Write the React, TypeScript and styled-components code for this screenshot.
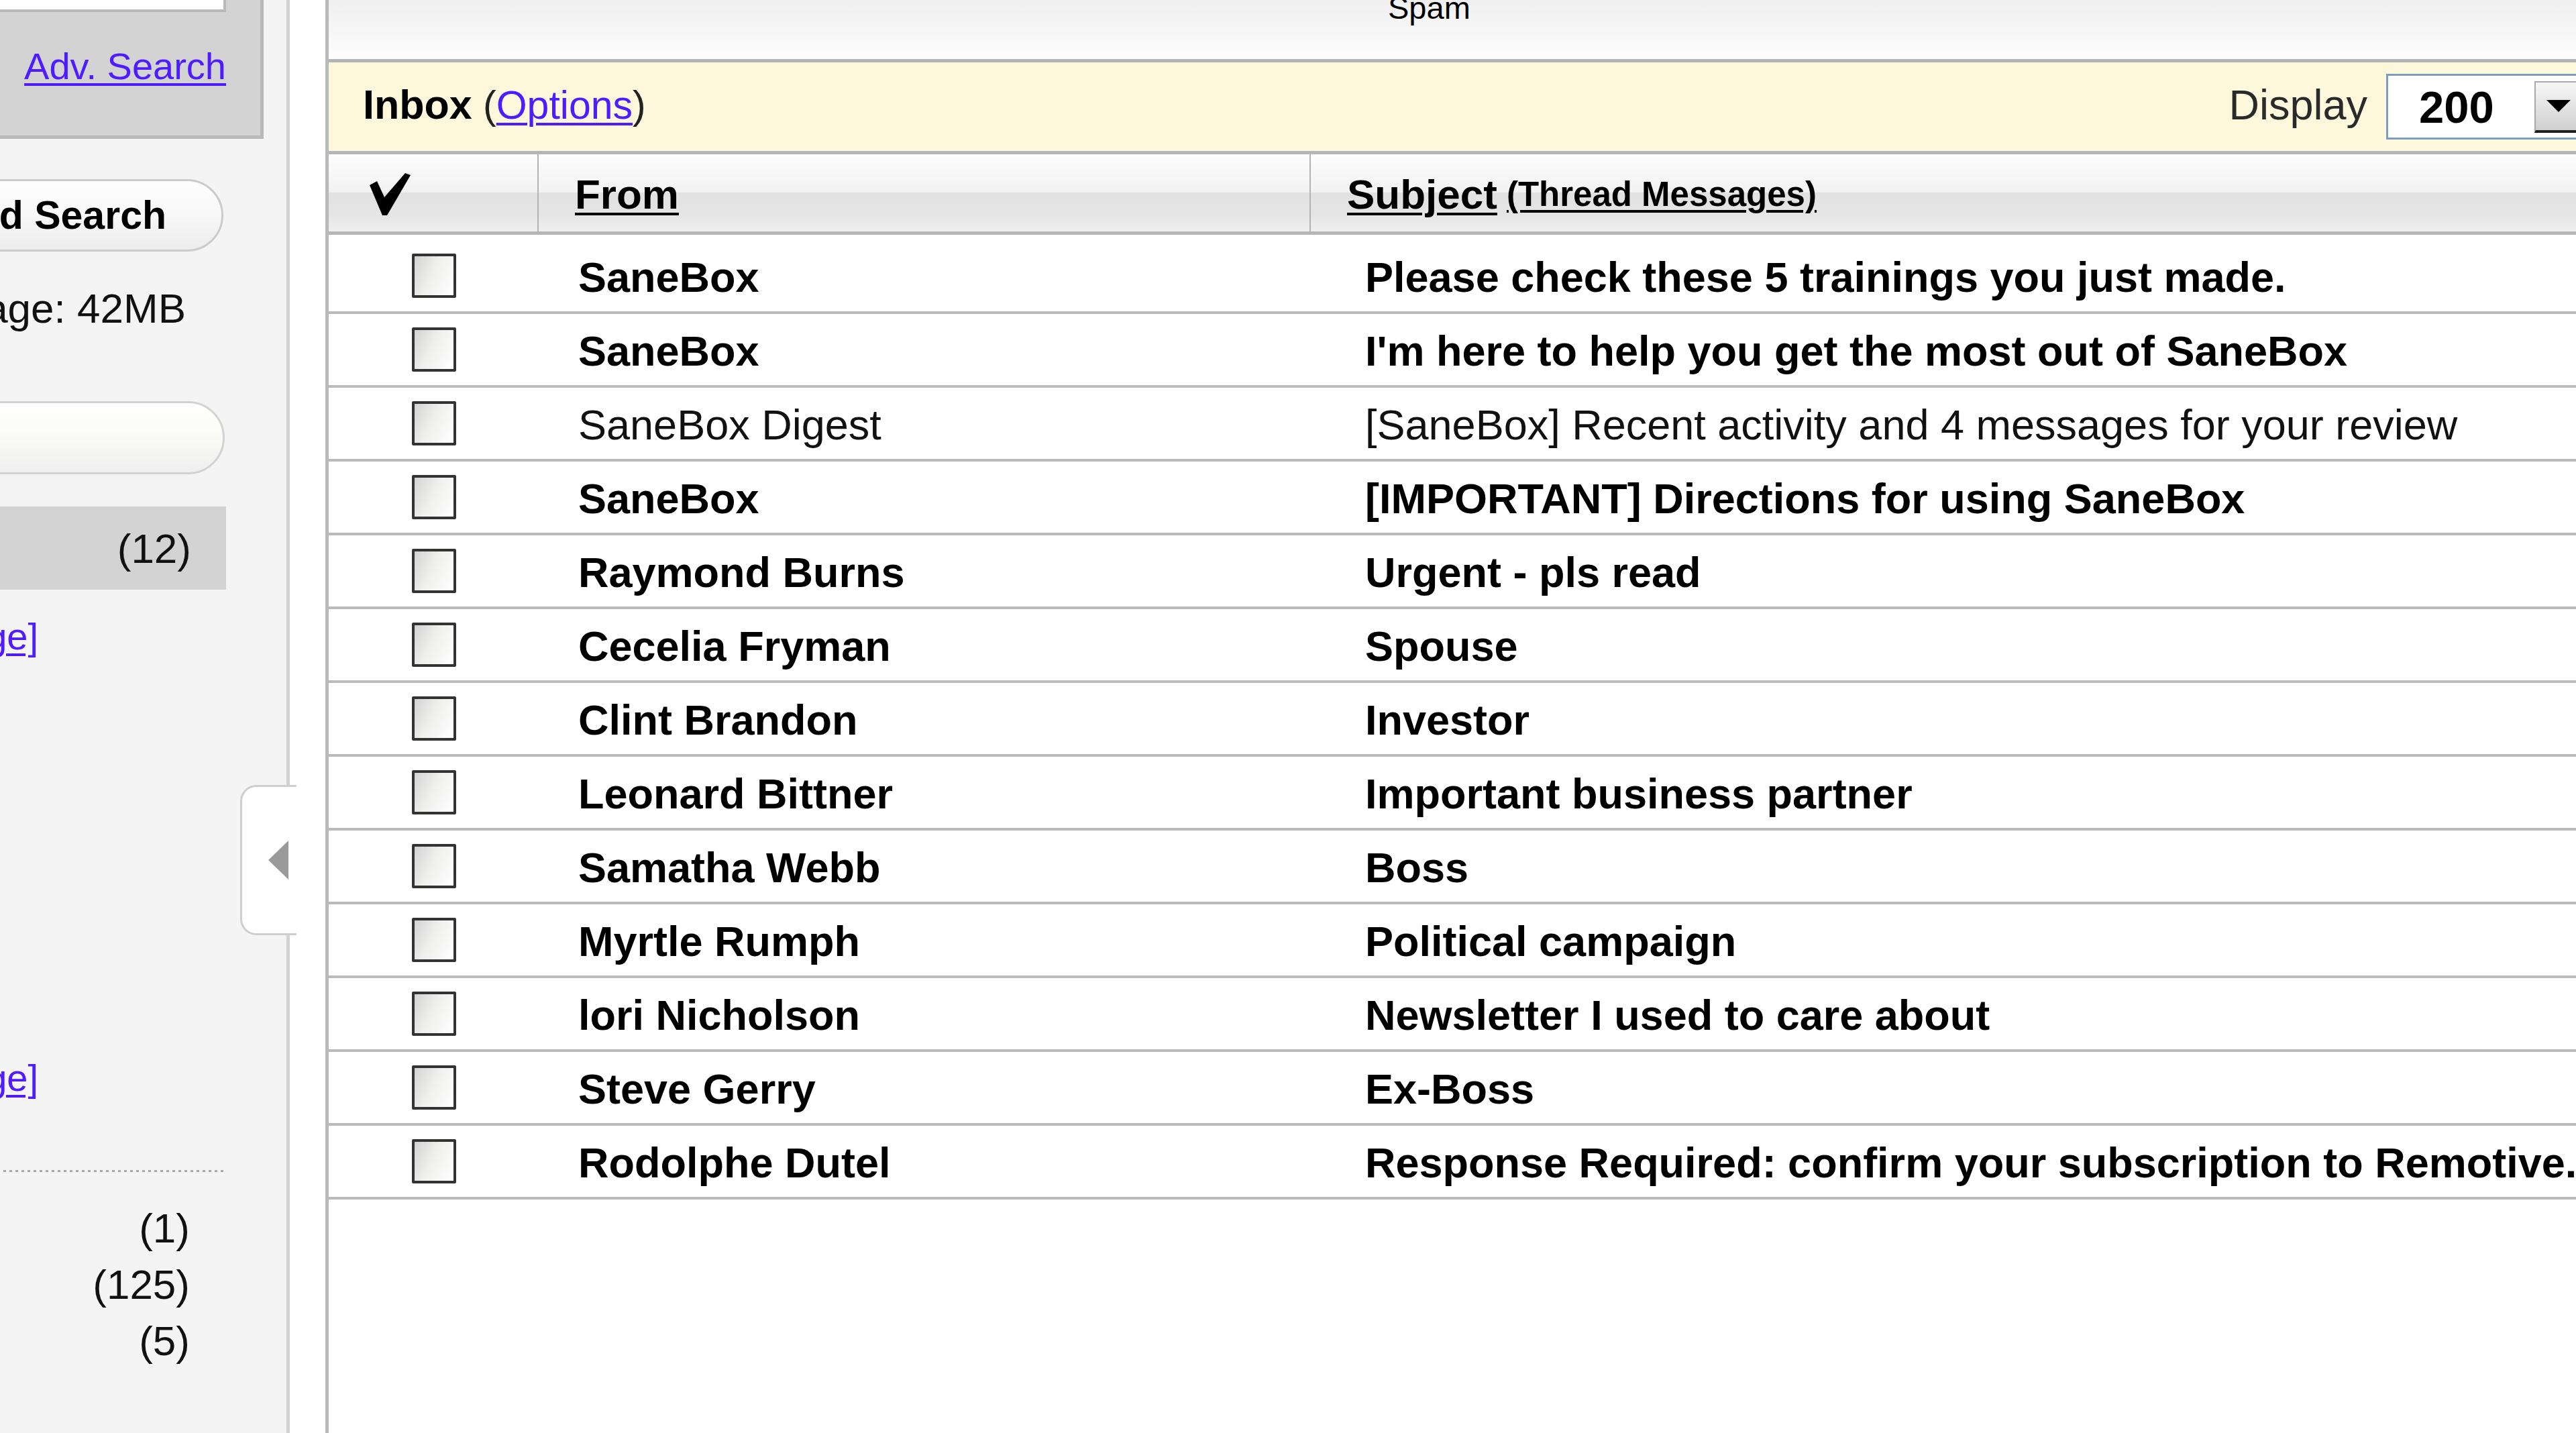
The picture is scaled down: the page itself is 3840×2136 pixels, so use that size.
import React from "react";
import styled, { createGlobalStyle } from "styled-components";

const GlobalStyle = createGlobalStyle`
  html, body { margin: 0; padding: 0; background: #fff; }
  body { font-family: "Liberation Sans", Arial, sans-serif; overflow: hidden; color: #000; }
  #root { width: 3840px; height: 2136px; }
`;

const LINK = "#4f1bff";

const Page = styled.div`
  display: flex;
  width: 3840px;
  height: 2136px;
  overflow: hidden;
  background: #fff;
`;

/* ---------- Sidebar ---------- */

const Sidebar = styled.aside`
  flex: none;
  width: 432px;
  height: 100%;
  box-sizing: border-box;
  background: #f4f4f4;
  border-right: 5px solid #d3d3d3;
  overflow: hidden;
  display: flex;
  flex-direction: column;
  align-items: flex-end;
  padding-right: 92px;
  white-space: nowrap;
`;

const SearchPanel = styled.div`
  flex: none;
  width: 800px;
  height: 207px;
  box-sizing: border-box;
  margin-right: -58px;
  background: #d3d3d3;
  border-right: 5px solid #b9b9b9;
  border-bottom: 5px solid #b9b9b9;
  display: flex;
  flex-direction: column;
  align-items: flex-end;
  padding-right: 51px;
`;

const SearchInput = styled.div`
  flex: none;
  width: 640px;
  height: 18px;
  box-sizing: border-box;
  background: #fff;
  border-right: 4px solid #b9b9b9;
  border-bottom: 4px solid #b9b9b9;
`;

const SideLink = styled.a<{ $top: number; $right?: number }>`
  display: block;
  flex: none;
  margin-top: ${(p) => p.$top}px;
  margin-right: ${(p) => p.$right ?? 0}px;
  font-size: 56px;
  line-height: 60px;
  color: ${LINK};
  text-decoration: underline;
  text-decoration-thickness: 4px;
  text-underline-offset: 6px;
  white-space: nowrap;
  cursor: pointer;
`;

const PillButton = styled.div`
  flex: none;
  width: 760px;
  height: 108px;
  margin-top: 60px;
  margin-right: 2px;
  box-sizing: border-box;
  border: 3px solid #cbcbcb;
  border-radius: 54px;
  background: linear-gradient(#fefefe 0%, #f8f8f8 50%, #ececec 100%);
  display: flex;
  align-items: center;
  justify-content: flex-end;
  padding-right: 82px;
  font-size: 59px;
  font-weight: 700;
`;

const SideText = styled.div<{ $top: number; $right: number; $lh?: number }>`
  flex: none;
  margin-top: ${(p) => p.$top}px;
  margin-right: ${(p) => p.$right}px;
  font-size: 62px;
  line-height: ${(p) => p.$lh ?? 70}px;
  color: #111;
  white-space: nowrap;
`;

const FilterPill = styled.div`
  flex: none;
  width: 760px;
  height: 109px;
  margin-top: 103px;
  box-sizing: border-box;
  border: 3px solid #d2d2d2;
  border-radius: 55px;
  background: linear-gradient(#ffffff 0%, #fbfbf8 40%, #efefef 100%);
`;

const ActiveFolder = styled.div`
  flex: none;
  width: 620px;
  height: 124px;
  margin-top: 48px;
  margin-right: -2px;
  box-sizing: border-box;
  background: #d3d3d3;
  display: flex;
  align-items: center;
  justify-content: flex-end;
  padding-right: 52px;
  font-size: 62px;
  color: #111;
`;

const DottedRule = styled.div`
  flex: none;
  width: 620px;
  height: 3px;
  margin-top: 107px;
  margin-right: -2px;
  background: repeating-linear-gradient(to right, #a9a9a9 0 4px, transparent 4px 9px);
`;

/* ---------- Splitter ---------- */

const Splitter = styled.div`
  flex: none;
  width: 53px;
  height: 100%;
  position: relative;
  background: #fff;
`;

const CollapseTab = styled.div`
  position: absolute;
  left: -74px;
  top: 1170px;
  width: 84px;
  height: 224px;
  box-sizing: border-box;
  background: #fff;
  border: 3px solid #cfcfcf;
  border-right: none;
  border-radius: 24px 0 0 24px;
  display: flex;
  align-items: center;
  padding-left: 39px;
`;

const LeftArrow = styled.span`
  width: 0;
  height: 0;
  border-right: 30px solid #9a9a9a;
  border-top: 29px solid transparent;
  border-bottom: 29px solid transparent;
`;

/* ---------- Main ---------- */

const Main = styled.main`
  flex: 1;
  min-width: 0;
  height: 100%;
  border-left: 5px solid #b9b9b9;
  display: flex;
  flex-direction: column;
  overflow: hidden;
  background: #fff;
`;

const TopBar = styled.div`
  flex: none;
  height: 88px;
  border-bottom: 5px solid #b5b5b5;
  background: linear-gradient(#efefef, #fdfdfd);
  padding-left: 1579px;
`;

const TabLabel = styled.div`
  font-size: 47px;
  line-height: 24px;
  color: #000;
`;

const InboxBar = styled.div`
  flex: none;
  height: 132px;
  box-sizing: content-box;
  padding: 0 0 0 51px;
  border-bottom: 5px solid #b5b5b5;
  background: #fdf8dc;
  display: flex;
  align-items: center;
  justify-content: space-between;
  white-space: nowrap;
`;

const InboxTitle = styled.div`
  font-size: 61px;
  display: flex;
  align-items: baseline;
  margin-bottom: 6px;
`;

const Strong = styled.span`
  font-weight: 700;
`;

const Paren = styled.span`
  font-size: 59px;
  color: #222;
`;

const InlineLink = styled.a`
  color: ${LINK};
  text-decoration: underline;
  text-decoration-thickness: 4px;
  text-underline-offset: 6px;
  cursor: pointer;
`;

const DisplayGroup = styled.div`
  display: flex;
  align-items: center;
  margin-right: -117px;
`;

const DisplayLabel = styled.span`
  font-size: 63px;
  color: #2a2a2a;
  margin-right: 28px;
  margin-bottom: 6px;
`;

const SelectBox = styled.div`
  width: 400px;
  height: 98px;
  box-sizing: border-box;
  border: 3px solid #7d9dc0;
  background: #fff;
  display: flex;
  align-items: center;
  padding-left: 46px;
`;

const SelectValue = styled.span`
  font-size: 67px;
  font-weight: 700;
`;

const SelectButton = styled.span`
  width: 130px;
  height: 77px;
  margin-left: 60px;
  box-sizing: border-box;
  border: 2px solid #a9a9a9;
  border-bottom: 4px solid #1e1e1e;
  background: linear-gradient(#f7f7f7, #cfcfcf);
  display: flex;
  align-items: center;
  padding-left: 16px;
`;

const DownArrow = styled.span`
  width: 0;
  height: 0;
  border-top: 18px solid #000;
  border-left: 18px solid transparent;
  border-right: 18px solid transparent;
`;

const cols = "313px 1151px 1fr";

const HeaderRow = styled.div`
  flex: none;
  height: 115px;
  border-bottom: 5px solid #b5b5b5;
  background: linear-gradient(
    #fdfdfd 0%,
    #f2f2f2 49%,
    #e1e1e1 50%,
    #e5e5e5 78%,
    #efefef 100%
  );
  display: grid;
  grid-template-columns: ${cols};
  white-space: nowrap;
`;

const HeadCell = styled.div<{ $pad: number; $divider?: boolean }>`
  display: flex;
  align-items: center;
  box-sizing: border-box;
  padding-left: ${(p) => p.$pad}px;
  padding-top: 4px;
  border-right: ${(p) => (p.$divider ? "2px solid #b3b3b3" : "none")};
`;

const SortLink = styled.a<{ $small?: boolean }>`
  font-size: ${(p) => (p.$small ? 51 : 62)}px;
  font-weight: 700;
  color: #000;
  text-decoration: underline;
  text-decoration-thickness: 4px;
  text-underline-offset: 6px;
  cursor: pointer;
`;

const HeadGap = styled.span`
  display: inline-block;
  width: 14px;
`;

const List = styled.div`
  display: flex;
  flex-direction: column;
`;

const Row = styled.div`
  height: 106px;
  border-bottom: 4px solid #bababa;
  display: grid;
  grid-template-columns: ${cols};
  white-space: nowrap;
  &:first-child {
    padding-top: 8px;
  }
`;

const CheckCell = styled.div`
  display: flex;
  align-items: center;
  justify-content: center;
`;

const Checkbox = styled.span`
  width: 66px;
  height: 66px;
  box-sizing: border-box;
  border: 4px solid #333;
  border-radius: 2px;
  background: linear-gradient(115deg, #d3d3d3 0%, #efefee 45%, #ffffff 100%);
`;

const TextCell = styled.div<{ $pad: number; $bold: boolean }>`
  display: flex;
  align-items: center;
  padding-left: ${(p) => p.$pad}px;
  padding-top: 3px;
  font-size: 63px;
  font-weight: ${(p) => (p.$bold ? 700 : 400)};
  color: ${(p) => (p.$bold ? "#000" : "#111")};
  overflow: hidden;
`;

type Message = { from: string; subject: string; unread: boolean };

const messages: Message[] = [
  { from: "SaneBox", subject: "Please check these 5 trainings you just made.", unread: true },
  { from: "SaneBox", subject: "I'm here to help you get the most out of SaneBox", unread: true },
  { from: "SaneBox Digest", subject: "[SaneBox] Recent activity and 4 messages for your review", unread: false },
  { from: "SaneBox", subject: "[IMPORTANT] Directions for using SaneBox", unread: true },
  { from: "Raymond Burns", subject: "Urgent - pls read", unread: true },
  { from: "Cecelia Fryman", subject: "Spouse", unread: true },
  { from: "Clint Brandon", subject: "Investor", unread: true },
  { from: "Leonard Bittner", subject: "Important business partner", unread: true },
  { from: "Samatha Webb", subject: "Boss", unread: true },
  { from: "Myrtle Rumph", subject: "Political campaign", unread: true },
  { from: "lori Nicholson", subject: "Newsletter I used to care about", unread: true },
  { from: "Steve Gerry", subject: "Ex-Boss", unread: true },
  { from: "Rodolphe Dutel", subject: "Response Required: confirm your subscription to Remotive.", unread: true },
];

const CheckMark = () => (
  <svg width="61" height="63" viewBox="0 0 61 63" aria-hidden>
    <path d="M0 18 L11 12 L22 36 L53 0 L61 3 L26 63 L19 63 Z" fill="#000" />
  </svg>
);

export default function App() {
  return (
    <>
      <GlobalStyle />
      <Page>
        <Sidebar>
          <SearchPanel>
            <SearchInput />
            <SideLink $top={51}>Adv. Search</SideLink>
          </SearchPanel>
          <PillButton>Saved Search</PillButton>
          <SideText $top={50} $right={58}>Storage: 42MB</SideText>
          <FilterPill />
          <ActiveFolder>(12)</ActiveFolder>
          <SideLink $top={40} $right={278}>[Manage]</SideLink>
          <SideLink $top={598} $right={278}>[Manage]</SideLink>
          <DottedRule />
          <SideText $top={42} $right={52} $lh={84}>(1)</SideText>
          <SideText $top={0} $right={52} $lh={84}>(125)</SideText>
          <SideText $top={0} $right={52} $lh={84}>(5)</SideText>
        </Sidebar>

        <Splitter>
          <CollapseTab>
            <LeftArrow />
          </CollapseTab>
        </Splitter>

        <Main>
          <TopBar>
            <TabLabel>Spam</TabLabel>
          </TopBar>

          <InboxBar>
            <InboxTitle>
              <Strong>Inbox</Strong>
              <Paren>
                &nbsp;(<InlineLink>Options</InlineLink>)
              </Paren>
            </InboxTitle>
            <DisplayGroup>
              <DisplayLabel>Display</DisplayLabel>
              <SelectBox>
                <SelectValue>200</SelectValue>
                <SelectButton>
                  <DownArrow />
                </SelectButton>
              </SelectBox>
            </DisplayGroup>
          </InboxBar>

          <HeaderRow>
            <HeadCell $pad={61} $divider>
              <CheckMark />
            </HeadCell>
            <HeadCell $pad={54} $divider>
              <SortLink>From</SortLink>
            </HeadCell>
            <HeadCell $pad={54}>
              <SortLink>Subject</SortLink>
              <HeadGap />
              <SortLink $small>(Thread Messages)</SortLink>
            </HeadCell>
          </HeaderRow>

          <List>
            {messages.map((m, i) => (
              <Row key={i}>
                <CheckCell>
                  <Checkbox />
                </CheckCell>
                <TextCell $pad={59} $bold={m.unread}>{m.from}</TextCell>
                <TextCell $pad={81} $bold={m.unread}>{m.subject}</TextCell>
              </Row>
            ))}
          </List>
        </Main>
      </Page>
    </>
  );
}
